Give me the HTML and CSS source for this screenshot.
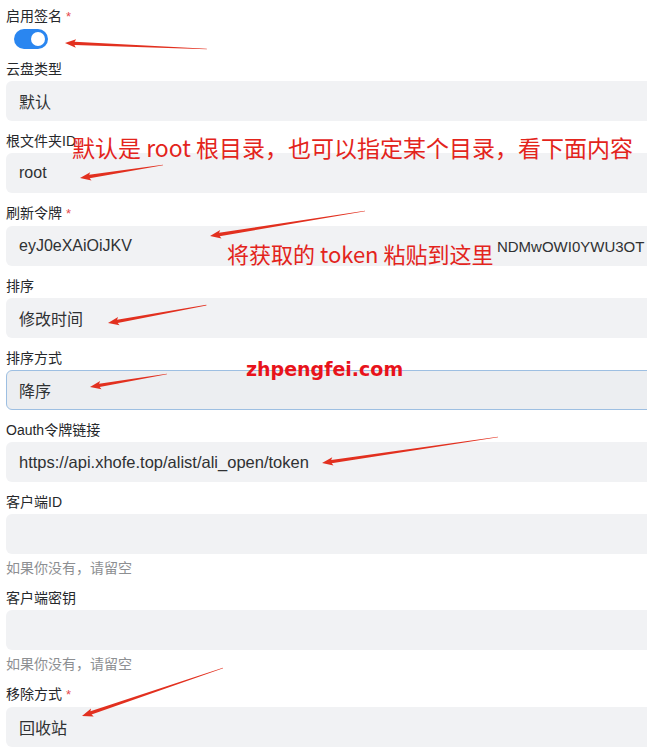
FILE: index.html
```html
<!DOCTYPE html>
<html lang="zh-CN">
<head>
<meta charset="utf-8">
<title>存储设置</title>
<link rel="stylesheet" href="styles.css">
</head>
<body>
<div class="page">
  <form class="form">
    <div class="field">
      <label class="label">启用签名 <span class="req">*</span></label>
      <div class="switch"><span class="knob"></span></div>
    </div>
    <div class="field">
      <label class="label">云盘类型</label>
      <div class="input">默认</div>
    </div>
    <div class="field">
      <label class="label">根文件夹ID</label>
      <div class="input">root</div>
    </div>
    <div class="field">
      <label class="label">刷新令牌 <span class="req">*</span></label>
      <div class="input token"><span class="token-head">eyJ0eXAiOiJKV</span><span class="token-tail">NDMwOWI0YWU3OT</span></div>
    </div>
    <div class="field">
      <label class="label">排序</label>
      <div class="input">修改时间</div>
    </div>
    <div class="field">
      <label class="label">排序方式</label>
      <div class="input focused">降序</div>
    </div>
    <div class="field">
      <label class="label">Oauth令牌链接</label>
      <div class="input url">https://api.xhofe.top/alist/ali_open/token</div>
    </div>
    <div class="field">
      <label class="label">客户端ID</label>
      <div class="input"></div>
      <p class="help">如果你没有，请留空</p>
    </div>
    <div class="field">
      <label class="label">客户端密钥</label>
      <div class="input"></div>
      <p class="help">如果你没有，请留空</p>
    </div>
    <div class="field">
      <label class="label">移除方式 <span class="req">*</span></label>
      <div class="input">回收站</div>
    </div>
  </form>

  <div class="notes">
    <span class="note note-root">默认是 root 根目录，也可以指定某个目录，看下面内容</span>
    <span class="note note-token">将获取的 token 粘贴到这里</span>
    <span class="mark">zhpengfei.com</span>
    <svg class="arrows" width="647" height="752" viewBox="0 0 647 752">
      <g fill="#e2301f">
        <g transform="translate(65,43) rotate(2.42)"><polygon points="0,0 11,-4.2 9.5,-1.7 142,-0.3 142,0.3 9.5,1.7 11,4.2"/></g>
        <g transform="translate(80,178) rotate(-8.9)"><polygon points="0,0 11,-4.2 9.5,-1.7 84,-0.3 84,0.3 9.5,1.7 11,4.2"/></g>
        <g transform="translate(210,236) rotate(-9.16)"><polygon points="0,0 11,-4.2 9.5,-1.7 157,-0.3 157,0.3 9.5,1.7 11,4.2"/></g>
        <g transform="translate(108,323) rotate(-10.3)"><polygon points="0,0 11,-4.2 9.5,-1.7 100,-0.3 100,0.3 9.5,1.7 11,4.2"/></g>
        <g transform="translate(90,387) rotate(-9.58)"><polygon points="0,0 11,-4.2 9.5,-1.7 78,-0.3 78,0.3 9.5,1.7 11,4.2"/></g>
        <g transform="translate(322,463) rotate(-8.4)"><polygon points="0,0 11,-4.2 9.5,-1.7 178,-0.3 178,0.3 9.5,1.7 11,4.2"/></g>
        <g transform="translate(82,716) rotate(-18.8)"><polygon points="0,0 11,-4.2 9.5,-1.7 149,-0.3 149,0.3 9.5,1.7 11,4.2"/></g>
      </g>
    </svg>
  </div>
</div>
</body>
</html>
```

FILE: styles.css
```css
html, body {
  margin: 0;
  padding: 0;
  background: #ffffff;
  overflow: hidden;
}

.page {
  position: relative;
  width: 647px;
  height: 752px;
  overflow: hidden;
  font-family: "Liberation Sans", "Noto Sans CJK SC", sans-serif;
  color: #2f3133;
}

.form {
  width: 700px;
  padding: 6px 0 0 6px;
  margin: 0;
}

.field {
  margin-bottom: 10px;
}

.label {
  display: block;
  font-size: 14px;
  line-height: 20px;
  margin-bottom: 2px;
  color: #26282b;
}

.req {
  color: #e5484d;
  font-size: 13px;
}

.switch {
  width: 34px;
  height: 20px;
  margin: 2px 0 0 8px;
  border-radius: 10px;
  background: #2a86f0;
  display: flex;
  align-items: center;
  justify-content: flex-end;
  padding: 0 3px;
  box-sizing: border-box;
}

.knob {
  width: 14px;
  height: 14px;
  border-radius: 50%;
  background: #ffffff;
}

.input {
  box-sizing: border-box;
  height: 40px;
  border-radius: 6px;
  background: #f1f2f4;
  border: 1px solid transparent;
  padding: 0 12px;
  display: flex;
  align-items: center;
  font-size: 16px;
  color: #2f3133;
  white-space: nowrap;
  overflow: hidden;
}

.input.url {
  font-size: 16.5px;
}

.input.focused {
  background: #eceef1;
  border-color: #9dbfe2;
}

.token-head {
  display: inline-block;
}

.token-tail {
  margin-left: 365px;
  font-size: 15px;
}

.help {
  margin: 4px 0 0;
  font-size: 14px;
  line-height: 20px;
  color: #8d8f92;
}

.notes {
  position: absolute;
  inset: 0;
  pointer-events: none;
}

.arrows {
  position: absolute;
  left: 0;
  top: 0;
}

.note {
  position: absolute;
  font-family: "Noto Sans CJK SC", sans-serif;
  font-size: 22px;
  line-height: 30px;
  color: #e3241c;
  white-space: nowrap;
}

.note-root {
  left: 72px;
  top: 132px;
  font-size: 23px;
}

.note-token {
  left: 227px;
  top: 238px;
}

.mark {
  position: absolute;
  left: 246px;
  top: 357px;
  font-family: "DejaVu Sans", sans-serif;
  font-weight: bold;
  font-size: 19px;
  line-height: 24px;
  color: #e8131b;
  white-space: nowrap;
}
```
